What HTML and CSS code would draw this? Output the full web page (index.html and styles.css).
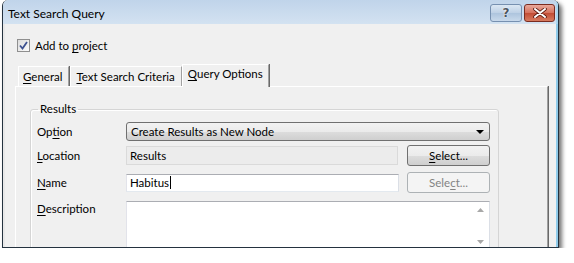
FILE: index.html
```html
<!DOCTYPE html>
<html>
<head>
<meta charset="utf-8">
<link rel="stylesheet" href="styles.css">
</head>
<body>
<div class="window">
  <div class="titlebar">
    <span class="title">Text Search Query</span>
    <div class="caption-btns">
      <span class="cap-btn help">?</span>
      <span class="cap-btn close">
        <svg width="14" height="10" viewBox="0 0 14 10"><path d="M2 1 L12 9 M12 1 L2 9" stroke="#5a1a10" stroke-width="3.6" stroke-linecap="round"/><path d="M2 1 L12 9 M12 1 L2 9" stroke="#fff" stroke-width="2" stroke-linecap="round"/></svg>
      </span>
    </div>
  </div>
  <div class="client">
    <div class="check-row">
      <span class="checkbox"><svg width="9" height="9" viewBox="0 0 9 9"><path d="M1 4.5 L3.5 7.5 L8 1" fill="none" stroke="#3d5190" stroke-width="1.8"/></svg></span>
      <span>Add to <u>p</u>roject</span>
    </div>
    <div class="tabs">
      <span class="tab first"><u>G</u>eneral</span>
      <span class="tab"><u>T</u>ext Search Criteria</span>
      <span class="tab active"><u>Q</u>uery Options</span>
    </div>
    <div class="panel">
      <fieldset class="group">
        <legend>Results</legend>
        <div class="row r1">
          <span class="lbl">Op<u>t</u>ion</span>
          <div class="combo wide"><span>Create Results as New Node</span><span class="arrow"></span></div>
        </div>
        <div class="row r2">
          <span class="lbl"><u>L</u>ocation</span>
          <div class="field readonly">Results</div>
          <div class="btn"><u>S</u>elect...</div>
        </div>
        <div class="row r3">
          <span class="lbl"><u>N</u>ame</span>
          <div class="field edit">Habitus<span class="caret"></span></div>
          <div class="btn disabled">Sele<u>c</u>t...</div>
        </div>
        <div class="row r4">
          <span class="lbl top"><u>D</u>escription</span>
          <div class="memo wide">
            <div class="vscroll">
              <svg width="7" height="4" viewBox="0 0 7 4"><path d="M0 4 L3.5 0 L7 4 Z" fill="#a8a8a8"/></svg>
              <svg width="7" height="4" viewBox="0 0 7 4"><path d="M0 0 L3.5 4 L7 0 Z" fill="#a8a8a8"/></svg>
            </div>
          </div>
        </div>
      </fieldset>
    </div>
  </div>
</div>
</body>
</html>
```
FILE: styles.css
```css
html, body {
  margin: 0;
  padding: 0;
  background: #ffffff;
}
body {
  font-family: Lato, "Noto Sans", sans-serif;
  font-size: 11.5px;
  color: #000;
  overflow: hidden;
}
u { text-decoration: underline; text-underline-offset: 2px; }

.window {
  margin-left: 2px;
  width: 557px;
  height: 248px;
  box-sizing: border-box;
  border: 1px solid #24323f;
  border-top: none;
  border-radius: 6px 6px 0 0;
  overflow: hidden;
  box-shadow: 3px 3px 4px rgba(0,0,0,0.55);
  display: flex;
  flex-direction: column;
  background: #f0f0f0;
}

.titlebar {
  height: 24px;
  flex: none;
  background: linear-gradient(#c0d4ea, #d3e2f1);
  display: flex;
  align-items: center;
  padding-left: 5px;
  box-shadow: inset -2px 0 0 #a9d6ef;
}
.title { flex: 1; font-size: 12px; padding-top: 2px; }
.caption-btns { display: flex; gap: 2px; margin-right: 3px; align-self: flex-start; margin-top: 4px; }
.cap-btn {
  height: 18px;
  box-sizing: border-box;
  border-radius: 3px;
  display: flex;
  align-items: center;
  justify-content: center;
}
.help {
  width: 32px;
  border: 1px solid #7690b0;
  background: linear-gradient(#dbe7f3, #bdd0e5 50%, #adc4dd 51%, #c8d9eb);
  color: #4b5560;
  font-family: "DejaVu Sans", sans-serif;
  font-weight: bold;
  font-size: 12px;
  text-shadow: 0 0 2px #fff, 0 0 1px #fff;
}
.close {
  width: 31px;
  border: 1px solid #7a2c20;
  background: linear-gradient(#e9a99b, #d5705b 50%, #c24c34 51%, #d77b5f);
}

.client {
  flex: 1;
  padding: 15px 10px 0 12px;
  box-shadow: inset -2px 0 0 #8fcbea, inset 2px 0 0 #e8e8e8;
  display: flex;
  flex-direction: column;
}

.check-row {
  display: flex;
  align-items: center;
  gap: 5px;
  margin-left: 2px;
  height: 13px;
}
.checkbox {
  width: 13px;
  height: 13px;
  box-sizing: border-box;
  border: 1px solid #8f8f8f;
  background: linear-gradient(135deg, #dcdcdc, #fbfbfb);
  display: flex;
  align-items: center;
  justify-content: center;
}

.tabs {
  margin-top: 12px;
  display: flex;
  align-items: flex-end;
  height: 22px;
  padding-left: 3px;
}
.tab {
  height: 20px;
  box-sizing: border-box;
  padding: 2px 6px 0 5px;
  line-height: 16px;
  border-left: 1px solid #fff;
  border-top: 1px solid #fff;
  border-right: 1px solid #a0a0a0;
  box-shadow: 1px 0 0 #696969;
  margin-right: 1px;
}
.tab.first { padding-left: 4px; }
.tab.active {
  padding: 1px 5px 0 5px;
  margin-left: -1px;
  position: relative;
  z-index: 1;
  background: #f0f0f0;
  margin-bottom: -1px;
  height: 23px;
}

.panel {
  flex: 1;
  border-top: 1px solid #fff;
  border-left: 1px solid #fff;
  border-right: 1px solid #a0a0a0;
  box-shadow: 1px 0 0 #696969;
  padding: 15px 48px 0 14px;
}

.group {
  margin: 0;
  padding: 6px 6px 0 6px;
  border: 1px solid #d5d5d5;
  border-radius: 3px;
  box-shadow: inset 1px 1px 0 #fff;
  height: 160px;
}
.group legend {
  padding: 0 2px;
  margin-left: 1px;
  line-height: 14px;
}

.row {
  display: grid;
  grid-template-columns: 80px 272px 83px;
  column-gap: 9px;
  align-items: center;
}
.r1 { height: 19px; }
.r2 { height: 21px; margin-top: 4px; }
.r3 { height: 21px; margin-top: 6px; }
.r4 { margin-top: 8px; align-items: start; }
.lbl.top { padding-top: 1px; }

.wide { grid-column: 2 / 4; }

.combo {
  height: 19px;
  box-sizing: border-box;
  border: 1px solid #707070;
  border-radius: 3px;
  background: linear-gradient(#f2f2f2, #ebebeb 50%, #dddddd 51%, #cfcfcf);
  display: flex;
  align-items: center;
  justify-content: space-between;
  padding: 0 5px 0 4px;
}
.arrow {
  width: 0;
  height: 0;
  border-left: 4px solid transparent;
  border-right: 4px solid transparent;
  border-top: 4px solid #000;
}

.field {
  box-sizing: border-box;
  display: flex;
  align-items: center;
  padding-left: 3px;
}
.readonly {
  height: 19px;
  background: #ececec;
  border: 1px solid #dadada;
}
.edit {
  height: 18px;
  width: 273px;
  background: #fff;
  border: 1px solid #abadb3;
  border-right-color: #dbdfe6;
  border-bottom-color: #e3e9ef;
  border-left-color: #e2e3ea;
}
.caret {
  display: inline-block;
  width: 1px;
  height: 13px;
  background: #000;
  margin-left: 1px;
}

.btn {
  height: 21px;
  box-sizing: border-box;
  border: 1px solid #707070;
  border-radius: 3px;
  background: linear-gradient(#f2f2f2, #ebebeb 50%, #dddddd 51%, #cfcfcf);
  display: flex;
  align-items: center;
  justify-content: center;
}
.btn.disabled {
  border-color: #adb2b5;
  background: #f4f4f4;
  color: #838383;
}

.memo {
  height: 70px;
  box-sizing: border-box;
  background: #fff;
  border: 1px solid #abadb3;
  border-left-color: #e2e3ea;
  border-right-color: #dbdfe6;
  display: flex;
  justify-content: flex-end;
}
.vscroll {
  width: 17px;
  display: flex;
  flex-direction: column;
  align-items: center;
  justify-content: space-between;
  padding: 6px 0 4px;
  box-sizing: border-box;
  height: 46px;
}
```
